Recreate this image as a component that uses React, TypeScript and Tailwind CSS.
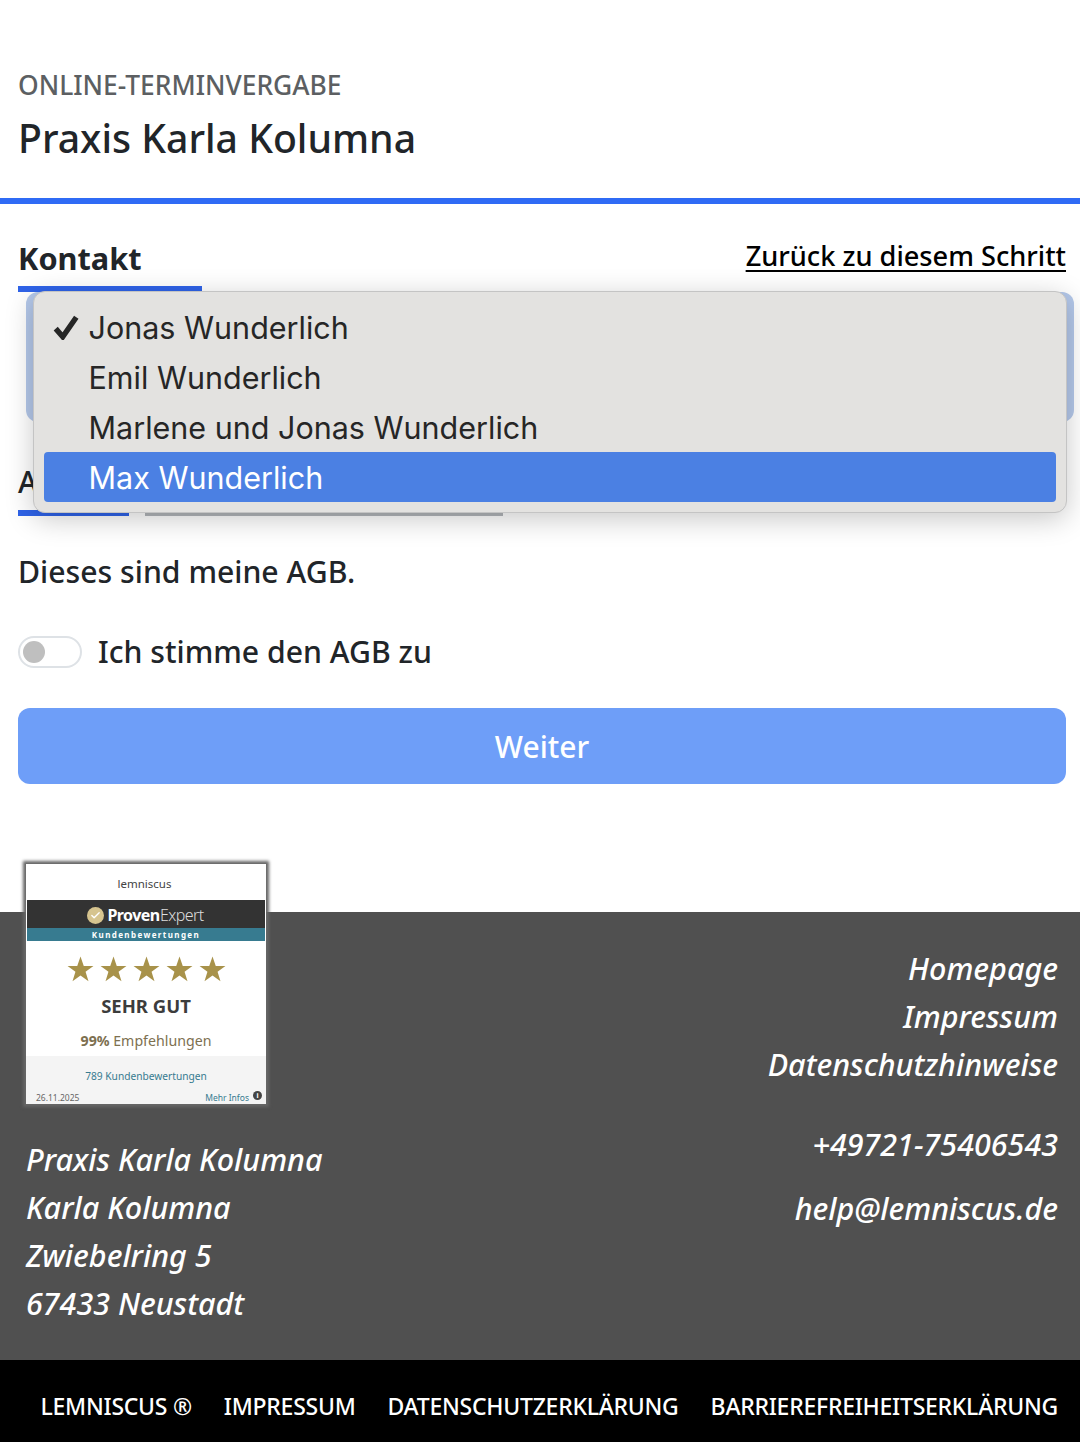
import { Check } from 'lucide-react';

const font = "font-['Noto_Sans',sans-serif]";

const menuItems = ['Jonas Wunderlich', 'Emil Wunderlich', 'Marlene und Jonas Wunderlich', 'Max Wunderlich'];

function Star() {
  return (
    <svg viewBox="0 0 24 24" className="w-[27px] h-[27px] fill-[#a8924a]">
      <path d="M12 0.5l2.9 8.3h8.6l-7 5.2 2.6 8.5L12 17.4l-7.1 5.1 2.6-8.5-7-5.2h8.6z" />
    </svg>
  );
}

function Badge() {
  return (
    <div className="relative z-10 -mt-[48px] w-[240px] h-[240px] bg-white shadow-[0_0_3px_3px_#666] flex flex-col overflow-hidden">
      <div className="h-[36px] flex items-center justify-center text-[11.5px] text-[#444] pt-[4px] -ml-[3px]">lemniscus</div>
      <div className="mx-[1px] h-[28px] bg-[#333333] flex items-center justify-center gap-[4px] pt-[2px] pr-[2px]">
        <div className="w-[17px] h-[17px] rounded-full bg-[#d6c48f] flex items-center justify-center">
          <Check size={11} strokeWidth={3} className="text-white" />
        </div>
        <span className="text-[16px] tracking-[-0.6px] text-white font-bold whitespace-nowrap">Proven <span className="font-light text-[#ddd] -ml-[3px]">Expert</span></span>
      </div>
      <div className="mx-[1px] h-[13px] bg-[#377b90] text-white text-[8px] font-bold tracking-[1.4px] flex items-center justify-center">Kundenbewertungen</div>
      <div className="flex justify-center gap-[6px] mt-[15px]">
        <Star />
        <Star />
        <Star />
        <Star />
        <Star />
      </div>
      <div className="text-center text-[18.5px] leading-[24px] font-bold text-[#3c3c3c] mt-[11px]">SEHR GUT</div>
      <div className="text-center text-[14.2px] leading-[20px] text-[#7d7050] mt-[13px]"><b className="font-bold">99%</b> Empfehlungen</div>
      <div className="relative flex-1 mt-[5px] bg-[#f4f4f4]">
        <div className="text-center text-[10.2px] leading-[14px] text-[#377b90] mt-[13px]">789 Kundenbewertungen</div>
        <span className="absolute left-[10px] bottom-0 text-[8.5px] leading-[12px] text-[#666]">26.11.2025</span>
        <span className="absolute right-[17px] bottom-0 text-[8.5px] leading-[12px] text-[#377b90]">Mehr Infos</span>
        <span className="absolute right-[4px] bottom-[4px] w-[9px] h-[9px] rounded-full bg-[#444] text-white text-[7px] leading-[9px] text-center font-bold">i</span>
      </div>
    </div>
  );
}

export default function App() {
  return (
    <div className={`${font} w-[1080px] h-[1442px] bg-white flex flex-col text-[#212529]`}>
      <header className="h-[204px] border-b-[6px] border-[#2f6bf5] px-[18px] pt-[66px]">
        <div className="text-[26.4px] leading-[38px] font-medium text-[#5c5f62]">ONLINE-TERMINVERGABE</div>
        <div className="text-[39.2px] leading-[56px] font-medium mt-[6px]">Praxis Karla Kolumna</div>
      </header>

      <main className="relative h-[708px] pl-[18px] pr-[14px]">
        <div className="flex items-end justify-between h-[88px]">
          <div className="w-[184px] h-[64px] border-b-[6px] border-[#2f63e8] text-[30.7px] font-bold leading-[48px] pt-[6px]">Kontakt</div>
          <a className="text-[27.2px] leading-[40px] font-medium text-black underline underline-offset-[4px] decoration-2 mb-[16px]">Zurück zu diesem Schritt</a>
        </div>
        <div className="ml-[8px] -mr-[8px] h-[130px] rounded-[12px] bg-[#b4c8ea]" />

        <div className="flex gap-[16px] items-end h-[94px]">
          <div className="w-[111px] h-[50px] border-b-[6px] border-[#2f63e8] text-[30px] font-medium leading-[44px]">
            <div className="-mt-[6px]">AGB</div>
          </div>
          <div className="w-[358px] border-b-[6px] border-[#b3b6ba]" />
        </div>

        <p className="text-[30.2px] leading-[44px] font-medium mt-[34px]">Dieses sind meine AGB.</p>

        <label className="flex items-center gap-[16px] mt-[36px]">
          <span className="w-[64px] h-[32px] rounded-full border-2 border-[#dee2e6] bg-white flex items-center pl-[3px]">
            <span className="w-[22px] h-[22px] rounded-full bg-[#bfbfbf]" />
          </span>
          <span className="text-[30.2px] leading-[44px] font-medium">Ich stimme den AGB zu</span>
        </label>

        <button className="mt-[34px] w-[1048px] h-[76px] rounded-[12px] bg-[#6e9ef8] text-white text-[30px] font-medium">Weiter</button>

        {/* native select popup lying over the form */}
        <div className="absolute left-[33px] top-[87px] w-[1034px] h-[222px] rounded-[12px] bg-[#e3e2e0] border border-[#c4c4c4] shadow-[0_6px_28px_rgba(0,0,0,0.22)] pt-[10px] px-[10px] font-['Inter',sans-serif] text-[30.5px] text-[#262626]">
          {menuItems.map((item, i) => (
            <div
              key={item}
              className={`h-[50px] rounded-[4px] flex items-center pl-[44.5px] pt-[2px] relative ${i === 3 ? 'bg-[#4b80e3] text-white' : ''}`}
            >
              {i === 0 && (
                <svg viewBox="0 0 24 24" className="absolute left-[9px] top-[12px] w-[26px] h-[26px] fill-none stroke-[#262626] stroke-[5]">
                  <path d="M2.5 13.5l6.5 7.5L21.5 3" />
                </svg>
              )}
              {item}
            </div>
          ))}
        </div>
      </main>

      <footer className="h-[448px] bg-[#505050] flex justify-between pl-[26px] pr-[22px] text-white">
        <div>
          <Badge />
          <div className="mt-[31px] italic font-medium text-[30.5px] leading-[48px]">
            <div>Praxis Karla Kolumna</div>
            <div>Karla Kolumna</div>
            <div>Zwiebelring 5</div>
            <div>67433 Neustadt</div>
          </div>
        </div>
        <div className="text-right pt-[32px] italic font-medium text-[30.5px] leading-[48px]">
          <div>Homepage</div>
          <div>Impressum</div>
          <div>Datenschutzhinweise</div>
          <div className="mt-[32px]">+49721-75406543</div>
          <div className="mt-[16px]">help@lemniscus.de</div>
        </div>
      </footer>

      <nav className="h-[82px] bg-black text-white text-[23px] font-medium tracking-[-0.26px] flex items-center justify-end gap-[32px] pr-[22px] whitespace-nowrap pt-[11px]">
        <span>LEMNISCUS ®</span>
        <span>IMPRESSUM</span>
        <span>DATENSCHUTZERKLÄRUNG</span>
        <span>BARRIEREFREIHEITSERKLÄRUNG</span>
      </nav>
    </div>
  );
}
